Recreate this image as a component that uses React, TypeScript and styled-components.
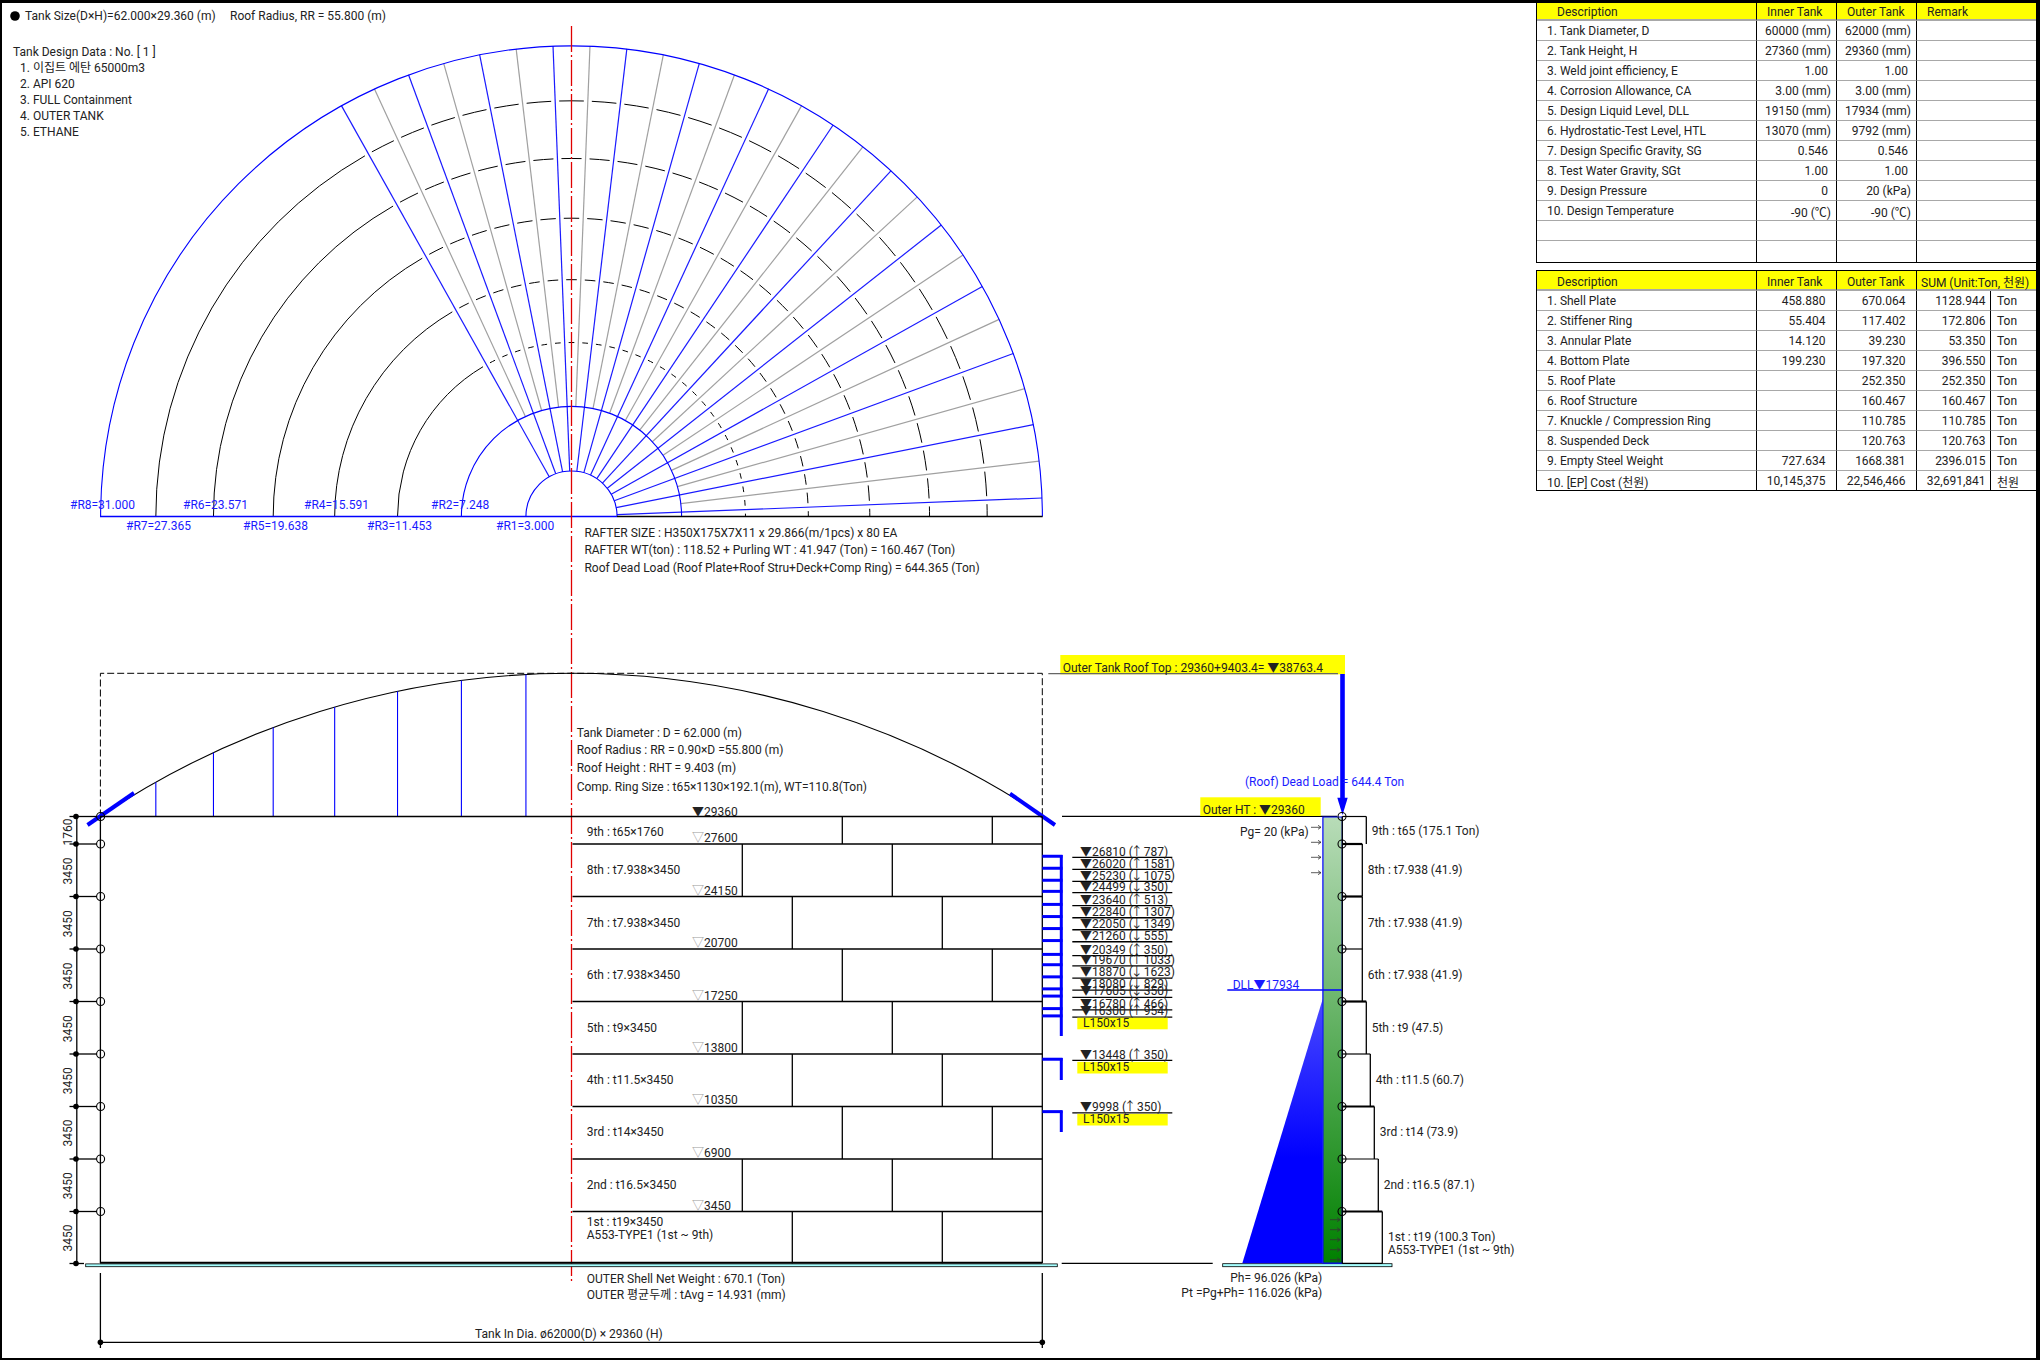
import React from 'react';
import styled, { createGlobalStyle } from 'styled-components';

const Global = createGlobalStyle`
  html, body { margin: 0; padding: 0; background: #fff; }
  body { font-family: Roboto, "Noto Sans CJK KR", sans-serif; }
`;

const Sheet = styled.div`
  box-sizing: border-box;
  width: 2040px;
  height: 1360px;
  background: #fff;
  border-style: solid;
  border-color: #000;
  border-width: 3px 4px 2px 2px;
  display: flex;
  align-items: flex-start;
  overflow: hidden;
`;

const Drawing = styled.svg`
  flex: 0 0 1534px;
  width: 1534px;
  height: 1355px;
  display: block;
`;

const SidePanel = styled.aside`
  flex: 0 0 500px;
  display: flex;
  flex-direction: column;
  gap: 7px;
`;

const SheetTable = styled.div<{ $rows: string; $top?: boolean }>`
  display: grid;
  grid-template-columns: 220px 80px 80px 74px 46px;
  grid-template-rows: ${p => p.$rows};
  border-left: 1px solid #000;
  border-bottom: 1px solid #000;
  border-top: ${p => (p.$top ? '0' : '1px solid #000')};
  font: 12px Roboto, "Noto Sans CJK KR", sans-serif;
  color: #222;
`;

const Cell = styled.div<{ $align?: string; $pad?: number; $span?: number; $noLine?: boolean }>`
  box-sizing: border-box;
  display: flex;
  align-items: center;
  justify-content: ${p => (p.$align === 'right' ? 'flex-end' : 'flex-start')};
  white-space: nowrap;
  padding-top: 1px;
  padding-left: ${p => (p.$align === 'right' ? 0 : p.$pad ?? 0)}px;
  padding-right: ${p => (p.$align === 'right' ? p.$pad ?? 0 : 0)}px;
  grid-column: span ${p => p.$span ?? 1};
  border-right: 1px solid #000;
  border-bottom: ${p => (p.$noLine ? '0' : '1px solid #a8a8a8')};
  &:last-child { border-right: 0; }
`;

const HeadCell = styled(Cell)<{ $drop?: number }>`
  background: #ffff00;
  border-bottom: 2px solid #a8a8a8;
  padding-top: ${p => p.$drop ?? 1}px;
`;

const Label = styled.text<{ $color?: string; $size?: number }>`
  font-family: Roboto, "Noto Sans CJK KR", sans-serif;
  font-size: ${p => p.$size ?? 12}px;
  fill: ${p => p.$color ?? '#222'};
`;

const Hollow = styled.tspan`
  fill: #9a9a9a;
`;

const Wire = styled.line<{ $color?: string; $w?: number; $dash?: string }>`
  stroke: ${p => p.$color ?? '#000'};
  stroke-width: ${p => p.$w ?? 1.3};
  stroke-dasharray: ${p => p.$dash ?? 'none'};
`;

const Curve = styled.path<{ $color?: string; $w?: number }>`
  fill: none;
  stroke: ${p => p.$color ?? '#000'};
  stroke-width: ${p => p.$w ?? 1};
`;

const Node = styled.circle`
  fill: none;
  stroke: #000;
  stroke-width: 1.1;
`;

const Dot = styled.circle`
  fill: #000;
`;

const Plate = styled.rect`
  fill: #a6ffff;
  stroke: #000;
  stroke-width: 0.8;
`;

const Marker = styled.rect`
  fill: #ffff00;
`;

const Fill = styled.path<{ $paint: string; $edge?: string }>`
  fill: ${p => p.$paint};
  stroke: ${p => p.$edge ?? 'none'};
  stroke-width: 1.2;
`;

const CX = 571.5;
const CY = 516.5;
const PX = 15.19;
const BLUE = '#0000ff';
const RADII = [3, 7.248, 11.453, 15.591, 19.638, 23.571, 27.365, 31].map(v => v * PX);

const pt = (r: number, deg: number) => {
  const a = (deg * Math.PI) / 180;
  return [CX + r * Math.cos(a), CY - r * Math.sin(a)] as const;
};
const arc = (r: number, a: number, b: number) => {
  const [x1, y1] = pt(r, a);
  const [x2, y2] = pt(r, b);
  return `M${x1.toFixed(2)} ${y1.toFixed(2)}A${r} ${r} 0 ${Math.abs(b - a) > 180 ? 1 : 0} 0 ${x2.toFixed(2)} ${y2.toFixed(2)}`;
};

const rafterAngles = Array.from({ length: 27 }, (_, k) => 2.25 + 4.5 * k);

const purlins = (r: number) => {
  const g = (4 / r) * (180 / Math.PI);
  const parts: string[] = [arc(r, 119.25 + g, 180), arc(r, 0, 2.25 - g)];
  for (let k = 0; k < 26; k++) parts.push(arc(r, rafterAngles[k] + g, rafterAngles[k + 1] - g));
  return parts.join('');
};

const radiusLabels: [string, number, number][] = [
  ['#R8=31.000', 70, 505], ['#R7=27.365', 126, 526], ['#R6=23.571', 183, 505], ['#R5=19.638', 243, 526],
  ['#R4=15.591', 304, 505], ['#R3=11.453', 367, 526], ['#R2=7.248', 431, 505], ['#R1=3.000', 496, 526],
];

const LEVELS = [816.5, 844, 896.5, 949, 1001.5, 1054, 1106.5, 1159, 1211.5, 1263.5];
const DIMS: [string, number][] = [['1760', 832], ['3450', 871], ['3450', 923.7], ['3450', 976], ['3450', 1028.7], ['3450', 1080.7], ['3450', 1133], ['3450', 1185.7], ['3450', 1238]];
const JOINTS: [number, number][] = [[842.3, 992.3], [742.3, 892.3], [792.3, 942.3], [842.3, 992.3], [742.3, 892.3], [792.3, 942.3], [842.3, 992.3], [742.3, 892.3], [792.3, 942.3]];

const COURSES: [string, number][] = [
  ['9th : t65×1760', 831.7], ['8th : t7.938×3450', 870.3], ['7th : t7.938×3450', 923.3], ['6th : t7.938×3450', 975.3],
  ['5th : t9×3450', 1028.3], ['4th : t11.5×3450', 1080.3], ['3rd : t14×3450', 1132.2], ['2nd : t16.5×3450', 1185.3],
  ['1st : t19×3450', 1222], ['A553-TYPE1 (1st ~ 9th)', 1235.2],
];
const ELEVS: [string, number][] = [
  ['27600', 838], ['24150', 890.7], ['20700', 943], ['17250', 995.7], ['13800', 1048], ['10350', 1100], ['6900', 1153], ['3450', 1205.7],
];

const STIFF: [string, string, string][] = [
  ['26810', '↑', '787'], ['26020', '↑', '1581'], ['25230', '↓', '1075'], ['24499', '↓', '350'], ['23640', '↑', '513'],
  ['22840', '↑', '1307'], ['22050', '↓', '1349'], ['21260', '↓', '555'], ['20349', '↑', '350'], ['19670', '↑', '1033'],
  ['18870', '↓', '1623'], ['18080', '↓', '829'], ['17605', '↓', '350'], ['16780', '↑', '466'], ['16300', '↑', '954'],
  ['13448', '↑', '350'], ['9998', '↑', '350'],
];
const elevY = (e: number) => 1263.5 - e * 0.01519;

const PROFILE: { x: number; top: number; bottom: number; heavy: boolean }[] = [
  { x: 1366.3, top: 816.5, bottom: 844, heavy: false },
  { x: 1362.3, top: 844, bottom: 896.5, heavy: true },
  { x: 1362.3, top: 896.5, bottom: 949, heavy: true },
  { x: 1362.3, top: 949, bottom: 1001.5, heavy: false },
  { x: 1366.3, top: 1001.5, bottom: 1054, heavy: true },
  { x: 1370.3, top: 1054, bottom: 1106.5, heavy: false },
  { x: 1374.3, top: 1106.5, bottom: 1159, heavy: true },
  { x: 1378.3, top: 1159, bottom: 1211.5, heavy: false },
  { x: 1382.3, top: 1211.5, bottom: 1263.5, heavy: true },
];
const PROFILE_TEXT: [string, number, number][] = [
  ['9th : t65 (175.1 Ton)', 1371.7, 831.2], ['8th : t7.938 (41.9)', 1367.7, 870.3], ['7th : t7.938 (41.9)', 1367.7, 923.3],
  ['6th : t7.938 (41.9)', 1367.7, 975.2], ['5th : t9 (47.5)', 1371.7, 1028.3], ['4th : t11.5 (60.7)', 1375.7, 1080.2],
  ['3rd : t14 (73.9)', 1379.7, 1132], ['2nd : t16.5 (87.1)', 1383.7, 1185.2], ['1st : t19 (100.3 Ton)', 1388, 1237],
  ['A553-TYPE1 (1st ~ 9th)', 1388, 1250],
];

const Arrow = ({ x, y, len = 10 }: { x: number; y: number; len?: number }) => (
  <Curve $color="#333" $w={0.8} d={`M${x} ${y}H${x + len}M${x + len - 3} ${y - 2}L${x + len} ${y}L${x + len - 3} ${y + 2}`} />
);

const T = ({ x, y, children, color, anchor, rotate }: { x: number; y: number; children: React.ReactNode; color?: string; anchor?: string; rotate?: boolean }) => (
  <Label
    x={x}
    y={y + 4}
    $color={color}
    textAnchor={anchor}
    transform={rotate ? `rotate(-90 ${x} ${y})` : undefined}
  >
    {children}
  </Label>
);

const domeY = (x: number) => 673.3 + 847.6 - Math.sqrt(847.6 * 847.6 - (x - CX) * (x - CX));

const TOP_ROWS: [string, string, string][] = [
  ['1. Tank Diameter, D', '60000 (mm)', '62000 (mm)'],
  ['2. Tank Height, H', '27360 (mm)', '29360 (mm)'],
  ['3. Weld joint efficiency, E', '1.00', '1.00'],
  ['4. Corrosion Allowance, CA', '3.00 (mm)', '3.00 (mm)'],
  ['5. Design Liquid Level, DLL', '19150 (mm)', '17934 (mm)'],
  ['6. Hydrostatic-Test Level, HTL', '13070 (mm)', '9792 (mm)'],
  ['7. Design Specific Gravity, SG', '0.546', '0.546'],
  ['8. Test Water Gravity, SGt', '1.00', '1.00'],
  ['9. Design Pressure', '0', '20 (kPa)'],
  ['10. Design Temperature', '-90 (℃)', '-90 (℃)'],
  ['', '', ''],
  ['', '', ''],
];
const SUM_ROWS: [string, string, string, string, string][] = [
  ['1. Shell Plate', '458.880', '670.064', '1128.944', 'Ton'],
  ['2. Stiffener Ring', '55.404', '117.402', '172.806', 'Ton'],
  ['3. Annular Plate', '14.120', '39.230', '53.350', 'Ton'],
  ['4. Bottom Plate', '199.230', '197.320', '396.550', 'Ton'],
  ['5. Roof Plate', '', '252.350', '252.350', 'Ton'],
  ['6. Roof Structure', '', '160.467', '160.467', 'Ton'],
  ['7. Knuckle / Compression Ring', '', '110.785', '110.785', 'Ton'],
  ['8. Suspended Deck', '', '120.763', '120.763', 'Ton'],
  ['9. Empty Steel Weight', '727.634', '1668.381', '2396.015', 'Ton'],
  ['10. [EP] Cost (천원)', '10,145,375', '22,546,466', '32,691,841', '천원'],
];

const valuePad = (v: string) => (v.endsWith(')') ? 5 : 8);

export default function App() {
  return (
    <Sheet>
      <Global />
      <Drawing viewBox="2 3 1534 1355">
        <defs>
          <linearGradient id="wallFill" x1="0" y1="0" x2="0" y2="1">
            <stop offset="0" stopColor="#b8dcb8" />
            <stop offset="1" stopColor="#008000" />
          </linearGradient>
          <linearGradient id="headFill" x1="0" y1="0" x2="0" y2="1">
            <stop offset="0" stopColor="#4a4aff" />
            <stop offset="0.6" stopColor="#0000ff" />
            <stop offset="1" stopColor="#0000ff" />
          </linearGradient>
        </defs>

        {/* plan */}
        {rafterAngles.map((a, k) => {
          const even = k % 2 === 0;
          const [x1, y1] = pt(even ? RADII[0] : RADII[1], a);
          const [x2, y2] = pt(RADII[7], a);
          return <Wire key={a} x1={x1} y1={y1} x2={x2} y2={y2} $color={even ? '#1a1aff' : '#a0a0a0'} $w={1.2} />;
        })}
        {RADII.slice(2, 7).map(r => <Curve key={r} d={purlins(r)} />)}
        {[0, 1, 7].map(i => <Curve key={i} $color={BLUE} $w={1.1} d={arc(RADII[i], 0, 180)} />)}
        <Wire x1={100} y1={CY} x2={617} y2={CY} $color={BLUE} />
        <Wire x1={617} y1={CY} x2={1042.6} y2={CY} />
        {radiusLabels.map(([t, x, y]) => <T key={t} x={x} y={y} color="#1a1aff">{t}</T>)}

        <Wire x1={CX} y1={26} x2={CX} y2={1283} $color="#e00000" $w={1.3} $dash="26 3 2 3" />

        <circle cx={15} cy={16} r={4.8} fill="#000" />
        <T x={25} y={16}>Tank Size(D×H)=62.000×29.360 (m)</T>
        <T x={230} y={16}>Roof Radius, RR = 55.800 (m)</T>
        <T x={13} y={52}>Tank Design Data : No. [ 1 ]</T>
        {['1. 이집트 에탄 65000m3', '2. API 620', '3. FULL Containment', '4. OUTER TANK', '5. ETHANE'].map((t, i) => (
          <T key={t} x={20} y={67.7 + i * 16}>{t}</T>
        ))}
        <T x={584.4} y={532.7}>RAFTER SIZE : H350X175X7X11 x 29.866(m/1pcs) x 80 EA</T>
        <T x={584.4} y={550.3}>RAFTER WT(ton) : 118.52 + Purling WT : 41.947 (Ton) = 160.467 (Ton)</T>
        <T x={584.4} y={568.3}>Roof Dead Load (Roof Plate+Roof Stru+Deck+Comp Ring) = 644.365 (Ton)</T>

        {/* elevation: roof */}
        <Curve $w={1} d="M100.4 816.5V673.3H1042.3V816.5" strokeDasharray="7 3" />
        <Curve $w={1.1} d={`M100 816.5A847.6 847.6 0 0 1 1043 816.5`} />
        {RADII.slice(0, 7).map(r => (
          <Wire key={r} x1={CX - r} y1={domeY(CX - r)} x2={CX - r} y2={816} $color={BLUE} $w={1.1} />
        ))}
        <Wire x1={87.5} y1={825} x2={134} y2={793} $color={BLUE} $w={4} />
        <Wire x1={1010} y1={793.7} x2={1055} y2={825} $color={BLUE} $w={4} />
        <Wire x1={100} y1={816.5} x2={1042.3} y2={816.5} />
        <Wire x1={1062} y1={816.3} x2={1337} y2={816.3} />
        <T x={576.7} y={732.7}>Tank Diameter : D = 62.000 (m)</T>
        <T x={576.7} y={750.3}>Roof Radius : RR = 0.90×D =55.800 (m)</T>
        <T x={576.7} y={768.3}>Roof Height : RHT = 9.403 (m)</T>
        <T x={576.7} y={786.7}>Comp. Ring Size : t65×1130×192.1(m), WT=110.8(Ton)</T>

        {/* elevation: shell */}
        <Wire x1={76.8} y1={816.5} x2={76.8} y2={1263.5} />
        <Wire x1={100.4} y1={816.5} x2={100.4} y2={1263} />
        <Wire x1={1042.3} y1={816.5} x2={1042.3} y2={1263} />
        {LEVELS.map((y, i) => (
          <g key={y}>
            <Wire x1={69.5} y1={y} x2={i === 9 ? 84 : 97} y2={y} />
            <Dot cx={76} cy={y} r={2.8} />
            {i < 9 && <Node cx={100.6} cy={y} r={4} />}
            {i > 0 && i < 9 && <Wire x1={572.5} y1={y} x2={1042.3} y2={y} />}
          </g>
        ))}
        {DIMS.map(([t, y]) => <T key={y} x={68} y={y} anchor="middle" rotate>{t}</T>)}
        {JOINTS.map(([a, b], i) => (
          <g key={i}>
            <Wire x1={a} y1={LEVELS[i]} x2={a} y2={LEVELS[i + 1]} />
            <Wire x1={b} y1={LEVELS[i]} x2={b} y2={LEVELS[i + 1]} />
          </g>
        ))}
        <Wire x1={100} y1={1262.7} x2={1042.3} y2={1262.7} $w={2} />
        <Plate x={85.7} y={1263.9} width={971.6} height={2.8} />
        <Wire x1={1061.7} y1={1263.3} x2={1212.7} y2={1263.3} />
        <Plate x={1222.7} y={1263.7} width={169.3} height={3} />
        {COURSES.map(([t, y]) => <T key={t} x={586.7} y={y}>{t}</T>)}
        <T x={692} y={811.7}>▼29360</T>
        {ELEVS.map(([t, y]) => <T key={t} x={692} y={y}><Hollow>▽</Hollow>{t}</T>)}

        <T x={586.7} y={1278.7}>OUTER Shell Net Weight : 670.1 (Ton)</T>
        <T x={586.7} y={1294.5}>OUTER 평균두께 : tAvg = 14.931 (mm)</T>

        <Wire x1={100.4} y1={1273} x2={100.4} y2={1348} />
        <Wire x1={1042.3} y1={1273} x2={1042.3} y2={1348} />
        <Wire x1={100.4} y1={1342.3} x2={1042.3} y2={1342.3} />
        <Dot cx={100.4} cy={1342.3} r={2.8} />
        <Dot cx={1042.3} cy={1342.3} r={2.8} />
        <T x={475} y={1333.7}>Tank In Dia. ø62000(D) × 29360 (H)</T>

        {/* stiffeners */}
        <Wire x1={1061.3} y1={855} x2={1061.3} y2={1036} $color={BLUE} $w={3} />
        <Wire x1={1061.3} y1={1058} x2={1061.3} y2={1080} $color={BLUE} $w={3} />
        <Wire x1={1061.3} y1={1110.5} x2={1061.3} y2={1132} $color={BLUE} $w={3} />
        {STIFF.map(([e]) => {
          const y = elevY(Number(e));
          return (
            <g key={e}>
              <Wire x1={1042.3} y1={y} x2={1062.5} y2={y} $color={BLUE} $w={3} />
              <Wire x1={1072.3} y1={y + 1.2} x2={1172.3} y2={y + 1.2} />
            </g>
          );
        })}
        {[1017.7, 1061.9, 1113.9].map(y => <Marker key={y} x={1077.3} y={y} width={90.4} height={11.6} />)}
        {STIFF.map(([e, dir, d]) => (
          <T key={e} x={1080} y={elevY(Number(e)) - 4.6}>▼{e} (<tspan dx={-2}>{dir}</tspan><tspan dx={-2}> {d})</tspan></T>
        ))}
        {[1022.8, 1067, 1119].map(y => <T key={y} x={1083} y={y}>L150x15</T>)}

        {/* load diagram */}
        <Marker x={1060.3} y={655} width={284.7} height={19.3} />
        <Wire x1={1048.3} y1={673.7} x2={1338} y2={673.7} $color="#666" />
        <T x={1062.7} y={667.7}>Outer Tank Roof Top : 29360+9403.4= ▼38763.4</T>
        <Wire x1={1342.5} y1={674} x2={1342.5} y2={800} $color={BLUE} $w={4.6} />
        <Fill $paint={BLUE} d="M1337.3 797.7H1347.7L1342.5 815Z" />
        <T x={1245} y={782.2} color="#1a1aff">(Roof) Dead Load = 644.4 Ton</T>
        <Marker x={1200.3} y={797.3} width={120.4} height={18.7} />
        <T x={1202.7} y={810.2}>Outer HT : ▼29360</T>
        <T x={1240} y={832.2}>Pg= 20 (kPa)</T>

        <Fill $paint="url(#headFill)" d="M1322.7 999L1242.3 1263.2H1322.7Z" />
        <Fill $paint="url(#wallFill)" $edge={BLUE} d="M1322.9 817V1263.2H1342.3V817Z" />
        <Wire x1={1342.3} y1={816.5} x2={1342.3} y2={1263.5} />
        <Wire x1={1227.3} y1={990} x2={1342} y2={990} $color={BLUE} />
        <T x={1232.7} y={984.5} color="#1a1aff">DLL▼17934</T>
        {[827.3, 842.3, 857.3, 872.7].map(y => <Arrow key={y} x={1311} y={y} />)}
        {[1219.7, 1229.7, 1239.7, 1249.7, 1259.7].map(y => <Arrow key={y} x={1330} y={y} />)}

        {PROFILE.map(p => (
          <g key={p.top}>
            <Wire x1={1342.3} y1={p.top} x2={p.x} y2={p.top} $w={p.heavy ? 2.2 : 1.2} />
            <Wire x1={p.x} y1={p.top} x2={p.x} y2={p.bottom} />
            <Node cx={1342} cy={p.top} r={4} />
          </g>
        ))}
        <Wire x1={1342.3} y1={1263.3} x2={1382.3} y2={1263.3} />
        {PROFILE_TEXT.map(([t, x, y]) => <T key={t + y} x={x} y={y}>{t}</T>)}
        <T x={1322.3} y={1277.7} anchor="end">Ph= 96.026 (kPa)</T>
        <T x={1322.3} y={1292.7} anchor="end">Pt =Pg+Ph= 116.026 (kPa)</T>
      </Drawing>

      <SidePanel>
        <SheetTable $top $rows="18px repeat(11, 20px) 21px">
          <HeadCell $pad={20}>Description</HeadCell>
          <HeadCell $pad={10}>Inner Tank</HeadCell>
          <HeadCell $pad={10}>Outer Tank</HeadCell>
          <HeadCell $pad={10} $span={2}>Remark</HeadCell>
          {TOP_ROWS.map(([a, b, c], i) => {
            const last = i === TOP_ROWS.length - 1;
            return (
              <React.Fragment key={i}>
                <Cell $pad={10} $noLine={last}>{a}</Cell>
                <Cell $align="right" $pad={valuePad(b)} $noLine={last}>{b}</Cell>
                <Cell $align="right" $pad={valuePad(c)} $noLine={last}>{c}</Cell>
                <Cell $span={2} $noLine={last} />
              </React.Fragment>
            );
          })}
        </SheetTable>
        <SheetTable $rows="20px repeat(9, 20px) 19px">
          <HeadCell $pad={20} $drop={3}>Description</HeadCell>
          <HeadCell $pad={10} $drop={3}>Inner Tank</HeadCell>
          <HeadCell $pad={10} $drop={3}>Outer Tank</HeadCell>
          <HeadCell $pad={4} $drop={3} $span={2}>SUM (Unit:Ton, 천원)</HeadCell>
          {SUM_ROWS.map(([a, b, c, d, e], i) => (
            <React.Fragment key={i}>
              <Cell $pad={10} $noLine={i === 9}>{a}</Cell>
              <Cell $align="right" $pad={10.5} $noLine={i === 9}>{b}</Cell>
              <Cell $align="right" $pad={10.5} $noLine={i === 9}>{c}</Cell>
              <Cell $align="right" $pad={4.5} $noLine={i === 9}>{d}</Cell>
              <Cell $pad={6} $noLine={i === 9}>{e}</Cell>
            </React.Fragment>
          ))}
        </SheetTable>
      </SidePanel>
    </Sheet>
  );
}
